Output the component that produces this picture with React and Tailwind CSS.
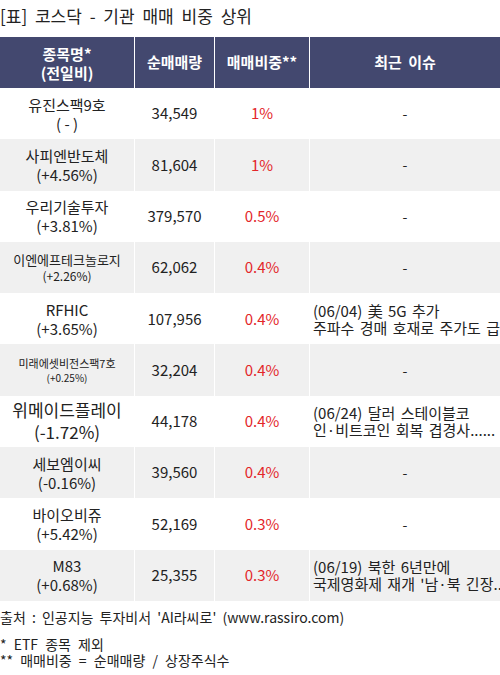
const rows = [
  { name: '유진스팩9호', chg: '( - )', qty: '34,549', ratio: '1%', issue: null, size: 'md' },
  { name: '사피엔반도체', chg: '(+4.56%)', qty: '81,604', ratio: '1%', issue: null, size: 'md' },
  { name: '우리기술투자', chg: '(+3.81%)', qty: '379,570', ratio: '0.5%', issue: null, size: 'md' },
  { name: '이엔에프테크놀로지', chg: '(+2.26%)', qty: '62,062', ratio: '0.4%', issue: null, size: 'sm' },
  {
    name: 'RFHIC',
    chg: '(+3.65%)',
    qty: '107,956',
    ratio: '0.4%',
    issue: ['(06/04) 美 5G 추가', '주파수 경매 호재로 주가도 급등'],
    size: 'md',
  },
  { name: '미래에셋비전스팩7호', chg: '(+0.25%)', qty: '32,204', ratio: '0.4%', issue: null, size: 'xs' },
  {
    name: '위메이드플레이',
    chg: '(-1.72%)',
    qty: '44,178',
    ratio: '0.4%',
    issue: ['(06/24) 달러 스테이블코', '인·비트코인 회복 겹경사......'],
    size: 'lg',
  },
  { name: '세보엠이씨', chg: '(-0.16%)', qty: '39,560', ratio: '0.4%', issue: null, size: 'md' },
  { name: '바이오비쥬', chg: '(+5.42%)', qty: '52,169', ratio: '0.3%', issue: null, size: 'md' },
  {
    name: 'M83',
    chg: '(+0.68%)',
    qty: '25,355',
    ratio: '0.3%',
    issue: ['(06/19) 북한 6년만에', "국제영화제 재개 '남·북 긴장..."],
    size: 'md',
  },
]

const nameSize = {
  xs: ['text-[11px] leading-[15px]', 'text-[10px] leading-[14px]'],
  sm: ['text-[13px] leading-[17px]', 'text-[12px] leading-[16px]'],
  md: ['text-[15px] leading-[19px]', 'text-[15px] leading-[19px]'],
  lg: ['text-[17px] leading-[22px]', 'text-[17px] leading-[22px]'],
}

function Row({ row, striped }) {
  const [nameCls, chgCls] = nameSize[row.size]
  return (
    <div className={`grid h-[51.3px] grid-cols-[135px_80px_95px_190px] ${striped ? 'bg-[#f0f0f0]' : 'bg-white'}`}>
      <div className="flex flex-col items-center justify-center border-r border-white text-[#222]">
        <span className={nameCls}>{row.name}</span>
        <span className={chgCls}>{row.chg}</span>
      </div>
      <div className="flex items-center justify-center border-r border-white text-[15px] text-[#222]">
        {row.qty}
      </div>
      <div className="flex items-center justify-center border-r border-white text-[15px] text-[#e3262a]">
        {row.ratio}
      </div>
      {row.issue ? (
        <div className="flex flex-col justify-center overflow-hidden pl-[3px] text-[15px] leading-[17px] text-[#222] [word-spacing:2px]">
          <span className="whitespace-nowrap">{row.issue[0]}</span>
          <span className="whitespace-nowrap">{row.issue[1]}</span>
        </div>
      ) : (
        <div className="flex items-center justify-center text-[14px] text-[#222]">-</div>
      )}
    </div>
  )
}

export default function App() {
  return (
    <div className="h-[675px] w-[500px] bg-white font-['Noto_Sans_CJK_KR',sans-serif]">
      <div className="flex h-[37px] items-center pb-[5px] text-[17px] text-[#222] [word-spacing:4px]">
        [표] 코스닥 - 기관 매매 비중 상위
      </div>

      <div className="grid h-[51px] grid-cols-[135px_80px_95px_190px] bg-[#43486f] text-[15px] font-bold text-white">
        <div className="flex flex-col items-center justify-center border-r border-white leading-[19px]">
          <span>종목명*</span>
          <span>(전일비)</span>
        </div>
        <div className="flex items-center justify-center border-r border-white">순매매량</div>
        <div className="flex items-center justify-center border-r border-white">매매비중**</div>
        <div className="flex items-center justify-center [word-spacing:3px]">최근 이슈</div>
      </div>

      {rows.map((row, i) => (
        <Row key={row.name} row={row} striped={i % 2 === 1} />
      ))}

      <div className="mt-[7px] text-[14px] leading-[18px] text-[#222] [word-spacing:3px]">
        출처 : 인공지능 투자비서 'AI라씨로' (www.rassiro.com)
      </div>
      <div className="mt-[10px] text-[14px] leading-[16px] text-[#222] [word-spacing:4px]">
        <div>* ETF 종목 제외</div>
        <div>** 매매비중 = 순매매량 / 상장주식수</div>
      </div>
    </div>
  )
}
